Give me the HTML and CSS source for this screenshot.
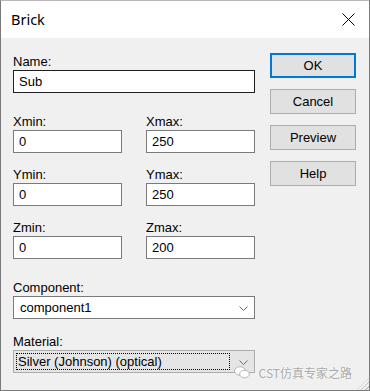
FILE: index.html
```html
<!DOCTYPE html>
<html lang="en">
<head>
    <meta charset="UTF-8">
    <meta name="viewport" content="width=device-width, initial-scale=1.0">
    <title>Brick</title>
    <link rel="stylesheet" href="styles.css">
</head>
<body>

    <div class="window">
        <div class="titlebar">
            <span class="title">Brick</span>
            <span class="close">
                <svg width="13" height="13" viewBox="0 0 13 13"><path d="M0.5 0.5 L12.5 12.5 M12.5 0.5 L0.5 12.5" stroke="#000" stroke-width="1" fill="none"/></svg>
            </span>
        </div>

        <div class="dialog">
            <!-- Left side: fields -->
            <div class="form">
                <div class="field">
                    <div class="label">Name:</div>
                    <div class="box focused">Sub</div>
                </div>

                <div class="pair gap-big">
                    <div class="field">
                        <div class="label">Xmin:</div>
                        <div class="box">0</div>
                    </div>
                    <div class="field">
                        <div class="label">Xmax:</div>
                        <div class="box">250</div>
                    </div>
                </div>

                <div class="pair gap-small">
                    <div class="field">
                        <div class="label">Ymin:</div>
                        <div class="box">0</div>
                    </div>
                    <div class="field">
                        <div class="label">Ymax:</div>
                        <div class="box">250</div>
                    </div>
                </div>

                <div class="pair gap-small">
                    <div class="field">
                        <div class="label">Zmin:</div>
                        <div class="box">0</div>
                    </div>
                    <div class="field">
                        <div class="label">Zmax:</div>
                        <div class="box">200</div>
                    </div>
                </div>

                <div class="field gap-big">
                    <div class="label">Component:</div>
                    <div class="box combo">
                        <span class="combo-text">component1</span>
                        <svg class="chevron" width="9" height="5" viewBox="0 0 9 5"><path d="M0.5 0.5 L4.5 4.5 L8.5 0.5" stroke="#6b6b6b" stroke-width="1" fill="none"/></svg>
                    </div>
                </div>

                <div class="field gap-mid">
                    <div class="label">Material:</div>
                    <div class="box combo readonly">
                        <span class="combo-text dotted">Silver (Johnson) (optical)</span>
                        <svg class="chevron" width="9" height="5" viewBox="0 0 9 5"><path d="M0.5 0.5 L4.5 4.5 L8.5 0.5" stroke="#6b6b6b" stroke-width="1" fill="none"/></svg>
                    </div>
                </div>
            </div>

            <!-- Right side: buttons -->
            <div class="buttons">
                <button type="button" class="btn default">OK</button>
                <button type="button" class="btn">Cancel</button>
                <button type="button" class="btn">Preview</button>
                <button type="button" class="btn">Help</button>
            </div>
        </div>

        <div class="watermark">
            <svg width="16" height="13" viewBox="0 0 16 13">
                <ellipse cx="6" cy="5" rx="5.5" ry="4.3" fill="#fff" stroke="#b5b5b5"/>
                <ellipse cx="10.5" cy="8" rx="4.8" ry="3.8" fill="#fff" stroke="#b5b5b5"/>
            </svg>
            <span>CST仿真专家之路</span>
        </div>
        <div class="grip"></div>
    </div>

</body>
</html>
```

FILE: styles.css
```css
* {
    margin: 0;
    padding: 0;
    box-sizing: border-box;
}

body {
    font-family: 'Liberation Sans', Arial, sans-serif;
    font-size: 13px;
    color: #000;
    background: #f0f0f0;
}

.window {
    position: relative;
    width: 370px;
    height: 391px;
    border: 1px solid #7a7a7a;
    border-top-color: #b9b9b9;
    background: #f0f0f0;
    overflow: hidden;
}

.titlebar {
    height: 37px;
    background: #fff;
    display: flex;
    align-items: center;
    justify-content: space-between;
    padding: 0 14px 0 10px;
}

.title {
    font-family: 'Noto Sans', sans-serif;
    font-size: 14.5px;
    color: #000;
    margin-top: -1px;
}

.close {
    display: flex;
    margin-top: -1px;
}

.dialog {
    display: flex;
    gap: 15px;
    padding: 15px 12px 0 12px;
}

.form {
    width: 242px;
    padding-top: 1px;
    display: flex;
    flex-direction: column;
}

.field {
    display: flex;
    flex-direction: column;
}

.label {
    height: 15px;
    line-height: 15px;
    margin-bottom: 1px;
}

.pair {
    display: grid;
    grid-template-columns: 109px 109px;
    column-gap: 24px;
}

.gap-big {
    margin-top: 21px;
}

.gap-mid {
    margin-top: 15px;
}

.gap-small {
    margin-top: 14px;
}

.box {
    height: 23px;
    line-height: 21px;
    border: 1px solid #7a7a7a;
    background: #fff;
    padding-left: 5px;
    white-space: nowrap;
}

.box.focused {
    border-color: #1e1e1e;
}

.combo {
    display: flex;
    align-items: center;
    justify-content: space-between;
    padding: 0 6px 0 6px;
}

.combo .chevron {
    margin-top: 1px;
}

.combo.readonly {
    background: #e5e5e5;
    border-color: #adadad;
    padding: 2px 6px 2px 2px;
}

.combo-text.dotted {
    display: block;
    width: 214px;
    height: 17px;
    line-height: 15px;
    padding-left: 1px;
    border: 1px dotted #000;
}

.buttons {
    width: 86px;
    display: flex;
    flex-direction: column;
    gap: 11px;
}

.btn {
    height: 25px;
    width: 86px;
    font-family: 'Liberation Sans', Arial, sans-serif;
    font-size: 13px;
    color: #000;
    background: #e1e1e1;
    border: 1px solid #adadad;
    outline: none;
}

.btn.default {
    border: 2px solid #0078d7;
}

.watermark {
    position: absolute;
    right: 17px;
    bottom: 9px;
    display: flex;
    align-items: center;
    gap: 9px;
    font-family: 'Noto Sans CJK SC', sans-serif;
    font-size: 12px;
    color: #a8a8a8;
    text-shadow: 0 0 2px #fff, 0 0 1px #fff;
}

.grip {
    position: absolute;
    right: 0;
    bottom: 0;
    width: 12px;
    height: 12px;
    background: repeating-linear-gradient(135deg, transparent 0 2px, #c4c4c4 2px 3px);
    clip-path: polygon(100% 0, 100% 100%, 0 100%);
}
```
